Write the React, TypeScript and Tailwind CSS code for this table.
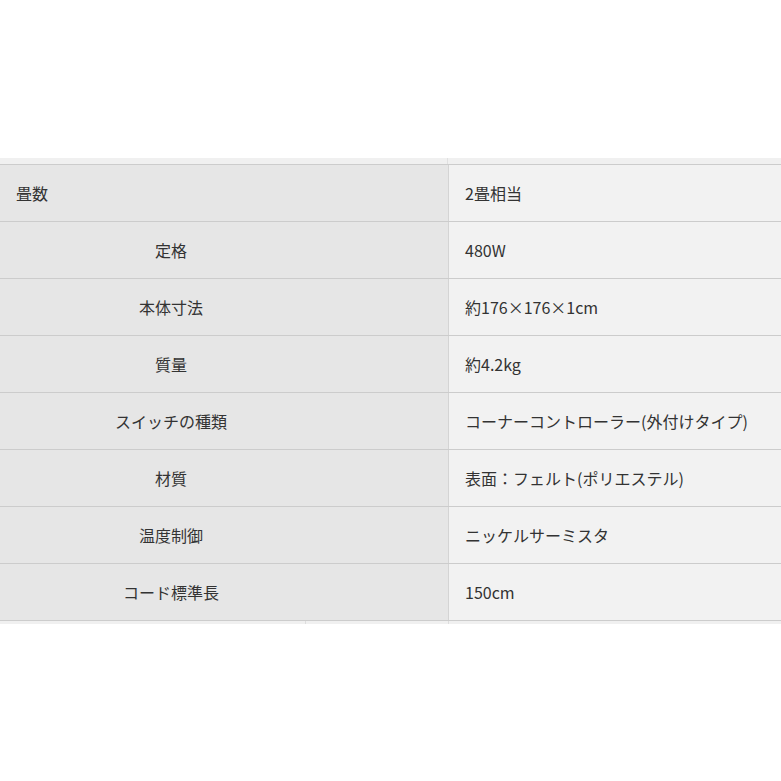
const rows: [string, string][] = [
  ["定格", "480W"],
  ["本体寸法", "約176×176×1cm"],
  ["質量", "約4.2kg"],
  ["スイッチの種類", "コーナーコントローラー(外付けタイプ)"],
  ["材質", "表面：フェルト(ポリエステル)"],
  ["温度制御", "ニッケルサーミスタ"],
  ["コード標準長", "150cm"],
];

export default function App() {
  return (
    <div
      className="w-[781px] h-[781px] overflow-hidden bg-white pt-[158px] text-[16px] text-[#333]"
      style={{ fontFamily: '"Noto Sans CJK JP", "Noto Sans", sans-serif' }}
    >
      <div className="flex h-[7px] border-b border-[#cccccc] bg-[#f0f0f0]">
        <div className="w-[448px] border-r border-[#e0e0e0]" />
        <div className="flex-1" />
      </div>

      <div className="flex h-[57px] border-b border-[#cccccc]">
        <div className="w-[449px] flex items-center bg-[#e6e6e6] border-r border-[#d4d4d4] pl-[16px]">
          畳数
        </div>
        <div className="flex-1 flex items-center bg-[#f2f2f2] pl-[16px]">2畳相当</div>
      </div>

      {rows.map(([label, value]) => (
        <div key={label} className="flex h-[57px] border-b border-[#cccccc]">
          <div className="w-[449px] flex items-center bg-[#e6e6e6] border-r border-[#d4d4d4]">
            <div className="w-[342px] text-center">{label}</div>
          </div>
          <div className="flex-1 flex items-center bg-[#f2f2f2] pl-[16px]">{value}</div>
        </div>
      ))}

      <div className="flex h-[3px] bg-[#f0f0f0]">
        <div className="w-[306px] border-r border-[#dddddd]" />
        <div className="w-[143px] border-r border-[#dddddd]" />
        <div className="flex-1" />
      </div>
    </div>
  );
}
